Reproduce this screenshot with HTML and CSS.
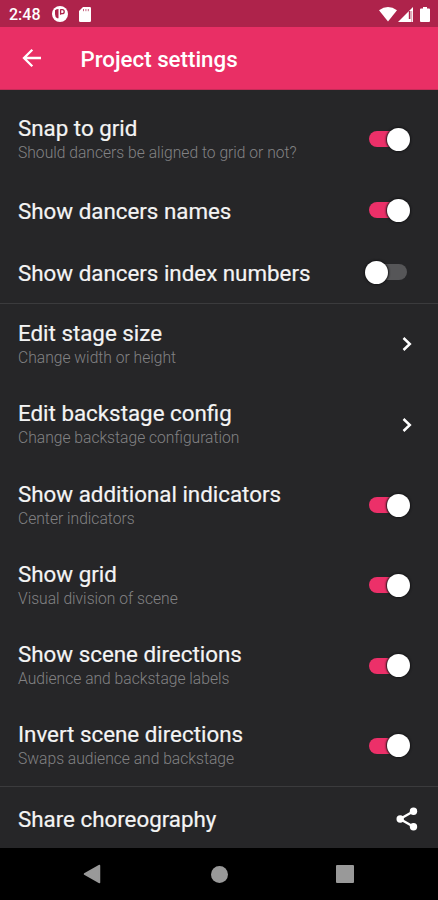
FILE: index.html
```html
<!DOCTYPE html>
<html lang="en">
<head>
<meta charset="utf-8">
<title>Project settings</title>
<link rel="stylesheet" href="styles.css">
</head>
<body>
<div class="screen">
  <div class="status">
    <span class="time">2:48</span>
    <svg class="app-dot" width="16" height="16" viewBox="0 0 16 16"><circle cx="8" cy="8" r="8" fill="#fff"/><path d="M3 4.200Q4.500 3 6.500 3v9.200H5.200Q3 11 3 8z" fill="#ae234b"/><path d="M8.600 3.200v5.600M8.600 3.700h1.600a2 2 0 0 1 0 4H8.600" fill="none" stroke="#ae234b" stroke-width="1.300"/></svg>
    <svg class="sd" width="12" height="15" viewBox="0 0 12 15"><path d="M4 0h6.700Q12 0 12 1.300v12.400q0 1.300-1.300 1.300H1.300Q0 15 0 13.700V4z" fill="#fff"/><path d="M4.500 2v2.200M6.900 2v2.200M9.300 2v2.200" stroke="#ae234b" stroke-width="1" opacity=".7"/></svg>
    <span class="spacer"></span>
    <svg width="18" height="15" viewBox="0 0 18 15"><path d="M0 3.200Q9-3.200 18 3.200L9 14.500z" fill="#fff"/></svg>
    <svg class="signal" width="15" height="15" viewBox="0 0 15 15"><path d="M15 0v15H0z" fill="#fff"/><path d="M11.600 4v8" stroke="#ae234b" stroke-width="1.600"/><path d="M13.700 4v11" stroke="#ae234b" stroke-width="1" opacity=".45"/></svg>
    <svg class="battery" width="10" height="15" viewBox="0 0 10 15"><path d="M3 0h4v1.500h2q1 0 1 1V14q0 1-1 1H1q-1 0-1-1V2.500q0-1 1-1h2z" fill="#fff"/></svg>
  </div>
  <header class="bar">
    <svg width="20" height="20" viewBox="0 0 20 20"><path d="M19 10H2.500M10.300 1.700 2 10l8.300 8.300" fill="none" stroke="#fff" stroke-width="2.300"/></svg>
    <h1>Project settings</h1>
  </header>
  <main>
    <section class="group first">
      <div class="row tall"><div><div class="title">Snap to grid</div><div class="sub">Should dancers be aligned to grid or not?</div></div><i class="switch on"></i></div>
      <div class="row"><div class="title">Show dancers names</div><i class="switch on"></i></div>
      <div class="row"><div class="title">Show dancers index numbers</div><i class="switch"></i></div>
    </section>
    <section class="group">
      <div class="row tall"><div><div class="title">Edit stage size</div><div class="sub">Change width or height</div></div><svg class="chev" width="10" height="16" viewBox="0 0 10 16"><path d="M1.500 2 7.800 8 1.500 14" fill="none" stroke="#fff" stroke-width="2.500"/></svg></div>
      <div class="row tall"><div><div class="title">Edit backstage config</div><div class="sub">Change backstage configuration</div></div><svg class="chev" width="10" height="16" viewBox="0 0 10 16"><path d="M1.500 2 7.800 8 1.500 14" fill="none" stroke="#fff" stroke-width="2.500"/></svg></div>
      <div class="row tall"><div><div class="title">Show additional indicators</div><div class="sub">Center indicators</div></div><i class="switch on"></i></div>
      <div class="row tall"><div><div class="title">Show grid</div><div class="sub">Visual division of scene</div></div><i class="switch on"></i></div>
      <div class="row tall"><div><div class="title">Show scene directions</div><div class="sub">Audience and backstage labels</div></div><i class="switch on"></i></div>
      <div class="row tall"><div><div class="title">Invert scene directions</div><div class="sub">Swaps audience and backstage</div></div><i class="switch on"></i></div>
    </section>
    <section class="group share">
      <div class="row"><div class="title">Share choreography</div><svg class="share-icon" width="22" height="24" viewBox="0 0 22 24"><path d="M18 4 4 12l14 8" fill="none" stroke="#fff" stroke-width="2.400"/><g fill="#fff"><circle cx="17.500" cy="4.200" r="3.700"/><circle cx="4.200" cy="12" r="3.700"/><circle cx="17.500" cy="19.800" r="3.700"/></g></svg></div>
    </section>
  </main>
  <nav class="nav">
    <svg width="18" height="20" viewBox="0 0 18 20"><path d="M16.500 1.500v17L1.500 10z" fill="#999" stroke="#999" stroke-width="1.500" stroke-linejoin="round"/></svg>
    <i class="home"></i>
    <i class="recent"></i>
  </nav>
</div>
</body>
</html>
```
FILE: styles.css
```css
* { box-sizing: border-box; }
body { margin: 0; background: #262628; font-family: Roboto, sans-serif; }
.screen { width: 438px; height: 900px; display: flex; flex-direction: column; overflow: hidden; }
svg, i { display: block; flex: none; }

.status { height: 27px; flex: none; display: flex; align-items: center; padding: 1px 8px 0 9px; background: #ae234b; }
.time { width: 43px; padding-top: 1px; color: #fff; font-size: 16px; font-weight: 500; line-height: 20px; }
.sd { margin-left: 11px; }
.spacer { flex: 1; }
.signal { margin-left: 1px; }
.battery { margin-left: 7px; }

.bar { height: 63px; flex: none; display: flex; align-items: center; padding: 0 22px; gap: 38.5px; background: #e92f65; border-bottom: 1px solid #c52c58; }
.bar h1 { margin: 2px 0 0; color: #fff; font-size: 22.300px; font-weight: 500; line-height: 28px; }

main { height: 758px; flex: none; background: #262628; }
.group { border-top: 1px solid #3b3b3d; }
.group.first { border-top: 0; padding-top: 9px; }
.row { height: 62px; display: flex; align-items: center; justify-content: space-between; padding: 0 28px 0 18px; }
.row > .title { padding-top: 1px; }
.row.tall { height: 80.300px; }
.share .row { height: 61px; padding: 2px 20px 0 18px; }
.title { color: #f4f4f4; font-size: 22.350px; line-height: 26px; white-space: nowrap; -webkit-text-stroke: 0.2px #f4f4f4; }
.sub { margin: 1px 0; color: #828284; font-size: 15.650px; font-weight: 300; line-height: 21px; white-space: nowrap; }

.switch { position: relative; width: 44px; height: 24px; }
.switch::before { content: ""; position: absolute; left: 6px; top: 4px; width: 35px; height: 16px; border-radius: 8px; background: #565658; }
.switch::after { content: ""; position: absolute; left: -1px; top: 0.500px; width: 23px; height: 23px; border-radius: 50%; background: #fff; box-shadow: 0 0 2px 1px #151517; }
.switch.on::before { left: 3px; background: #ec3069; }
.switch.on::after { left: 21px; }
.chev { margin-right: -2px; }

.nav { height: 52px; flex: none; display: flex; align-items: center; justify-content: space-between; padding: 0 84px 0 83px; background: #000; }
.home { width: 17px; height: 17px; margin-left: 1px; border-radius: 50%; background: #999; }
.recent { width: 18px; height: 18px; border-radius: 1px; background: #999; }
```
